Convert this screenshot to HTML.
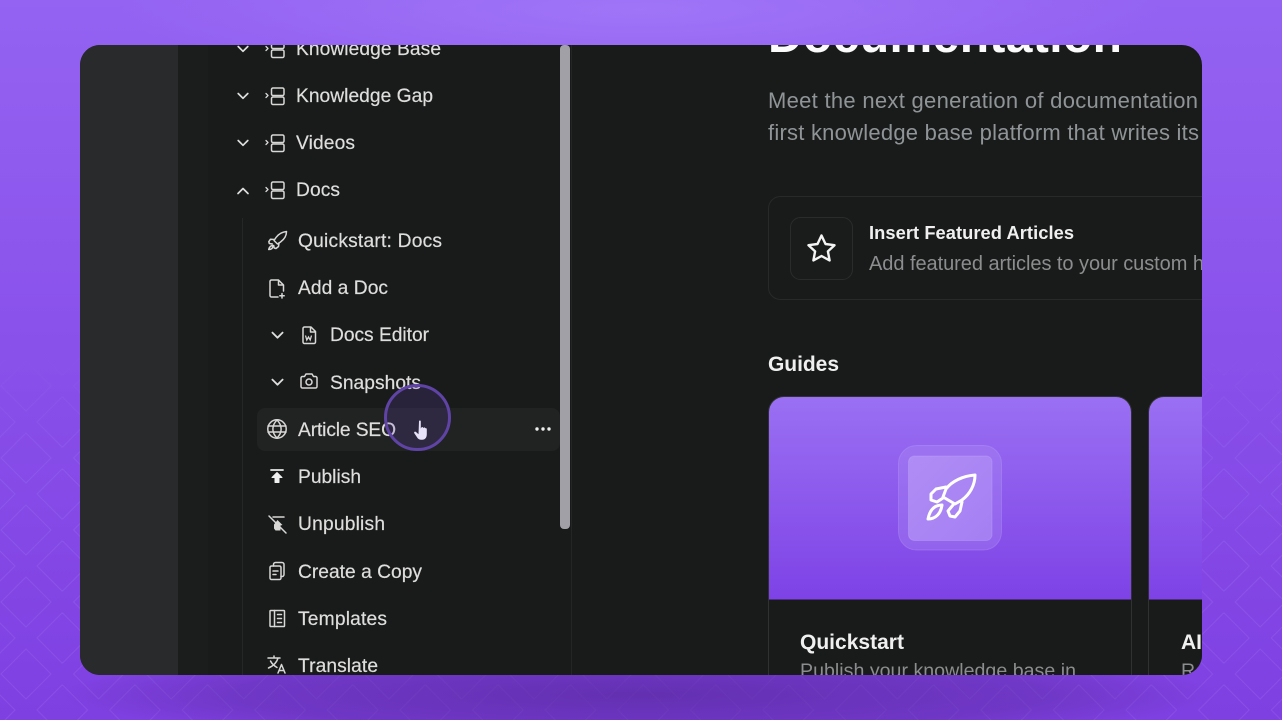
<!DOCTYPE html>
<html><head><meta charset="utf-8"><style>
html,body{margin:0;padding:0;width:1282px;height:720px;overflow:hidden;background:#8045e5}
svg{display:block}
text{font-family:"Liberation Sans",sans-serif}
.n{font-size:19.2px;fill:#dededc;stroke:#dededc;stroke-width:.2}
.i{fill:none;stroke:#d8d8d6;stroke-width:1.5;stroke-linecap:round;stroke-linejoin:round}
</style></head><body>
<svg width="1282" height="720" viewBox="0 0 1282 720" xmlns="http://www.w3.org/2000/svg">
<defs>
<linearGradient id="bgv" x1="0" y1="0" x2="0" y2="1"><stop offset="0" stop-color="#9463f2"/><stop offset=".5" stop-color="#8950ea"/><stop offset="1" stop-color="#7f40e2"/></linearGradient>
<radialGradient id="top" cx=".5" cy=".5" r=".5"><stop offset="0" stop-color="#a67ffa" stop-opacity=".65"/><stop offset="1" stop-color="#a67ffa" stop-opacity="0"/></radialGradient>
<radialGradient id="shadow" cx=".5" cy=".5" r=".5"><stop offset="0" stop-color="#5a2aa0" stop-opacity=".75"/><stop offset=".7" stop-color="#5a2aa0" stop-opacity=".42"/><stop offset="1" stop-color="#5a2aa0" stop-opacity="0"/></radialGradient>
<linearGradient id="card" x1="0" y1="0" x2="0" y2="1"><stop offset="0" stop-color="#9a70f3"/><stop offset="1" stop-color="#7e42e6"/></linearGradient>
<linearGradient id="fade" x1="0" y1="0" x2="0" y2="1"><stop offset=".46" stop-color="#000"/><stop offset=".66" stop-color="#fff"/></linearGradient>
<linearGradient id="inner" x1="0" y1="0" x2="1" y2="1"><stop offset="0" stop-color="#b08df5"/><stop offset="1" stop-color="#a47ff3"/></linearGradient>
<mask id="fm"><rect width="1282" height="720" fill="url(#fade)"/></mask>
<pattern id="dia" x="-10" y="386" width="72.6" height="72" patternUnits="userSpaceOnUse">
<path d="M11 72 36 47 61 72 36 97ZM11 0 36-25 61 0 36 25ZM47 36 72 11 97 36 72 61ZM-25 36 0 11 25 36 0 61Z" fill="none" stroke="#b99cf8" stroke-opacity=".16" stroke-width="1"/>
</pattern>
<clipPath id="win"><rect x="80" y="45" width="1122" height="630" rx="20"/></clipPath>
<symbol id="db" viewBox="0 0 22 20" overflow="visible"><path d="M1 6.500 3 8.500 1 10.500" fill="none" stroke="#d8d8d6" stroke-width="1.300" stroke-linecap="round" stroke-linejoin="round"/><rect x="6.500" y="1" width="12.500" height="7.500" rx="1.500" class="i"/><rect x="6.500" y="10" width="12.500" height="7.500" rx="1.500" class="i"/></symbol>
<symbol id="down" viewBox="0 0 12 8" overflow="visible"><path d="M1.200 1.500 6 6.300 10.800 1.500" fill="none" stroke="#dedede" stroke-width="1.700" stroke-linecap="round" stroke-linejoin="round"/></symbol>
</defs>

<rect width="1282" height="720" fill="url(#bgv)"/>
<ellipse cx="640" cy="10" rx="520" ry="75" fill="url(#top)"/>
<g mask="url(#fm)"><rect width="1282" height="720" fill="url(#dia)"/></g>
<ellipse cx="640" cy="695" rx="580" ry="50" fill="url(#shadow)"/>

<g clip-path="url(#win)">
<rect x="80" y="45" width="1122" height="630" fill="#191b1b"/>
<rect x="80" y="45" width="98" height="630" fill="#292a2c"/>
<rect x="178" y="45" width="30" height="630" fill="#1b1d1d"/>
<rect x="571" y="45" width="1" height="630" fill="#242626"/>
<rect x="242" y="218" width="1" height="457" fill="#252727"/>
<rect x="257" y="408" width="303" height="43" rx="8" fill="#212222"/>
<rect x="560" y="45" width="10" height="484" rx="4" fill="#a0a0a6"/>

<!-- nav -->
<use href="#down" x="237" y="45" width="12" height="8"/>
<use href="#down" x="237" y="92" width="12" height="8"/>
<use href="#down" x="237" y="139" width="12" height="8"/>
<path d="M238 193.500 243 188.500 248 193.500" fill="none" stroke="#dedede" stroke-width="1.700" stroke-linecap="round" stroke-linejoin="round"/>
<use href="#db" x="265" y="40" width="22" height="20"/>
<use href="#db" x="265" y="87" width="22" height="20"/>
<use href="#db" x="265" y="134" width="22" height="20"/>
<use href="#db" x="265" y="181" width="22" height="20"/>
<text class="n" x="296" y="55" textLength="145" lengthAdjust="spacing">Knowledge Base</text>
<text class="n" x="296" y="102" textLength="137" lengthAdjust="spacing">Knowledge Gap</text>
<text class="n" x="296" y="149" textLength="59" lengthAdjust="spacing">Videos</text>
<text class="n" x="296" y="196" textLength="44" lengthAdjust="spacing">Docs</text>
<text class="n" x="298" y="247" textLength="144" lengthAdjust="spacing">Quickstart: Docs</text>
<text class="n" x="298" y="294" textLength="90" lengthAdjust="spacing">Add a Doc</text>
<text class="n" x="330" y="341" textLength="99" lengthAdjust="spacing">Docs Editor</text>
<text class="n" x="330" y="389" textLength="91" lengthAdjust="spacing">Snapshots</text>
<text class="n" x="298" y="436" textLength="98" lengthAdjust="spacing">Article SEO</text>
<text class="n" x="298" y="483" textLength="63" lengthAdjust="spacing">Publish</text>
<text class="n" x="298" y="530" textLength="87" lengthAdjust="spacing">Unpublish</text>
<text class="n" x="298" y="578" textLength="124" lengthAdjust="spacing">Create a Copy</text>
<text class="n" x="298" y="625" textLength="89" lengthAdjust="spacing">Templates</text>
<text class="n" x="298" y="672" textLength="80" lengthAdjust="spacing">Translate</text>

<!-- rocket small -->
<path class="i" stroke-width="1.400" d="M286.500 231.500c-4.500.5-8 2.500-10.500 6l-2 3 3.500 3.500 3-2c3.500-2.500 6-6 6-10.500Z"/>
<path class="i" stroke-width="1.400" d="M274 239.500l-3.500-.3-1.700 2.500.5 1.800 3 .5M279 243l-.5 3.500-2.500 2-1.800-.5-.5-2.500"/>
<path class="i" stroke-width="1.400" d="M273 245.500c-2 0-3.500 1-4.300 4 3 0 4.300-1.500 4.300-4Z"/>
<!-- add doc -->
<path class="i" d="M278 297h-6.500a1.500 1.500 0 0 1-1.500-1.500v-14a1.500 1.500 0 0 1 1.500-1.500h7l5 5v6M278.500 280v5h5M282 293.500v4.500M279.800 295.800h4.400"/>
<!-- doc editor -->
<path class="i" d="M303 328.500a1.500 1.500 0 0 1 1.500-1.500h6.500l4.500 4.500v10.500a1.500 1.500 0 0 1-1.500 1.500h-9.500a1.500 1.500 0 0 1-1.500-1.500ZM310.500 327v5h5"/>
<path d="M305.500 335.500l1.300 4.500 1.700-3 1.700 3 1.300-4.500" fill="none" stroke="#d8d8d6" stroke-width="1.300"/>
<use href="#down" x="271" y="331" width="13" height="8.500"/>
<use href="#down" x="271" y="378" width="13" height="8.500"/>
<!-- camera -->
<path class="i" d="M301 378a1.500 1.500 0 0 1 1.500-1.500h2l1.500-2.500h6l1.500 2.500h2a1.500 1.500 0 0 1 1.500 1.500v8.500a1.500 1.500 0 0 1-1.500 1.500h-13a1.500 1.500 0 0 1-1.500-1.500Z"/>
<circle class="i" cx="309" cy="382" r="3"/>
<!-- globe -->
<g class="i"><circle cx="277" cy="429" r="9.200"/><path d="M268 426h18M268 432h18M277 420c-5.500 5.500-5.500 12.500 0 18M277 420c5.500 5.500 5.500 12.500 0 18"/></g>
<circle cx="537" cy="429" r="1.700" fill="#eee"/><circle cx="543" cy="429" r="1.700" fill="#eee"/><circle cx="549" cy="429" r="1.700" fill="#eee"/>
<!-- publish -->
<path d="M271 470h12" stroke="#e8e8e8" stroke-width="1.800" stroke-linecap="round"/>
<path d="M277 472.500l-5 5h3v5h4v-5h3Z" fill="#f0f0f0" stroke="#f0f0f0" stroke-linejoin="round"/>
<!-- unpublish -->
<path class="i" d="M269 516l17 17M273 517h11"/>
<path d="M274 524.500 277.500 520l5 5-2 .5v5h-5l-1.500-2v-3.500Z" fill="#d8d8d6"/>
<!-- copy -->
<g class="i" stroke-width="1.400"><rect x="270" y="566" width="11" height="13.500" rx="1.500"/><path d="M273.500 566v-1.500a2 2 0 0 1 2-2h6.500a2 2 0 0 1 2 2v10a2 2 0 0 1-2 2h-1M273 571h5M273 574.500h3"/></g>
<!-- templates -->
<g class="i" stroke-width="1.400"><rect x="270" y="610.500" width="14.500" height="16" rx=".8"/><path d="M274.500 610.500v16M277.500 614.500h4M277.500 618.500h4M277.500 622.500h4"/></g>
<!-- translate -->
<g class="i" stroke-width="1.400"><path d="M268 658h12M274 656v2M278 658c-1 4-4.500 8-9.500 10M270.500 661c1.500 3 4 5 6.500 6.500M278 673l3.500-8.500 3.500 8.500M279 670.500h5"/></g>

<!-- main -->
<text x="768" y="52" font-size="48" font-weight="700" fill="#fbfbfb" textLength="354" lengthAdjust="spacing">Documentation</text>
<text x="768" y="108" font-size="22" fill="#909496" textLength="430" lengthAdjust="spacing">Meet the next generation of documentation</text>
<text x="768" y="140" font-size="22" fill="#909496" textLength="431" lengthAdjust="spacing">first knowledge base platform that writes its</text>

<rect x="768.500" y="196.500" width="480" height="103" rx="12" fill="#191b1b" stroke="#282a2a"/>
<rect x="790.500" y="217.500" width="62" height="62" rx="10" fill="#1a1b1b" stroke="#2a2c2c"/>
<path d="M821.500 235.500l4 8.500 9 1.200-6.600 6.200 1.700 9-8.100-4.400-8.100 4.400 1.700-9-6.600-6.200 9-1.200Z" fill="none" stroke="#f4f4f4" stroke-width="2.400" stroke-linejoin="round"/>
<text x="869" y="239" font-size="18.3" font-weight="700" fill="#f0f0f0" textLength="205" lengthAdjust="spacing">Insert Featured Articles</text>
<text x="869" y="270" font-size="20" fill="#8b8d8e" textLength="335" lengthAdjust="spacing">Add featured articles to your custom h</text>

<text x="768" y="371" font-size="21" font-weight="700" fill="#f0f0f0" textLength="71" lengthAdjust="spacing">Guides</text>

<!-- cards -->
<path d="M768.500 675V412a15.500 15.500 0 0 1 15.500-15.500h332a15.500 15.500 0 0 1 15.500 15.500V675" fill="#191b1b" stroke="#303232"/>
<path d="M769 599.500V412a15 15 0 0 1 15-15h332a15 15 0 0 1 15 15V599.500Z" fill="url(#card)"/>
<path d="M1148.500 675V412a15.500 15.500 0 0 1 15.500-15.500h60V675" fill="#191b1b" stroke="#303232"/>
<path d="M1149 599.500V412a15 15 0 0 1 15-15h60V599.500Z" fill="url(#card)"/>

<rect x="898.500" y="445.500" width="103" height="104.500" rx="18" fill="#b295f6" fill-opacity=".3" stroke="#c7b2f8" stroke-opacity=".25"/>
<rect x="908.500" y="456" width="83.500" height="84.500" rx="6" fill="url(#inner)" stroke="#c8b2f8" stroke-opacity=".3"/>
<g fill="none" stroke="#fff" stroke-width="3" stroke-linejoin="round" stroke-linecap="round">
<path d="M975 475C963 476 952 481 946 489L943 497 955 504 962 500C970 494 975 485 975 475Z"/>
<path d="M946 487 936 489 931 494 931 500 937 502 943 498"/>
<path d="M962 502 960 511 955 517 950 516 948 511 953 505"/>
<path d="M942 505C935 505 930 509 928 519 936 519 941 513 942 505Z"/>
</g>

<text x="800" y="649" font-size="21" font-weight="700" fill="#f0f0f0" textLength="104" lengthAdjust="spacing">Quickstart</text>
<text x="800" y="677" font-size="19.6" fill="#8b8d8e" textLength="276" lengthAdjust="spacing">Publish your knowledge base in</text>
<text x="1181" y="649" font-size="21" font-weight="700" fill="#f0f0f0">AI</text>
<text x="1181" y="677" font-size="19.6" fill="#8b8d8e">Re</text>

<!-- cursor -->
<circle cx="417.500" cy="417.500" r="32" fill="#6a3fc0" fill-opacity=".2" stroke="#5f44a6" stroke-width="3"/>
<path d="M419 421.500c0-1.300 1.800-1.300 1.800 0v7l.6-1c.5-.8 1.700-.5 1.700.5l.5-.3c.5-.7 1.600-.3 1.700.6.6-.4 1.500 0 1.500.9v5c0 3.300-1.800 5.500-4.500 5.500h-1.500c-1.800 0-2.800-.9-3.700-2.300l-2.800-4.200c-.7-1.100.6-2.100 1.600-1.300l2.600 2.300Z" fill="#e8e2f8"/>
</g>
</svg>
</body></html>
